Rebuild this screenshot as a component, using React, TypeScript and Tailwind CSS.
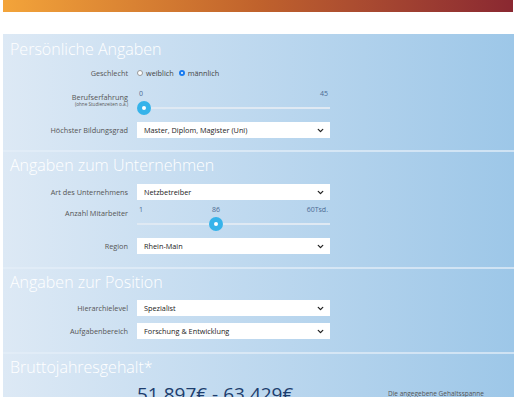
import { ChevronDown } from "lucide-react";

const font = { fontFamily: '"Open Sans", "Liberation Sans", sans-serif' };

function Select({ value }: { value: string }) {
  return (
    <div className="flex h-[16px] w-[193px] items-center justify-between bg-white pl-[7px] pr-[5px] text-[7.3px] text-[#222]">
      <span>{value}</span>
      <ChevronDown size={9} strokeWidth={3.5} className="text-[#222]" />
    </div>
  );
}

function Label({ children }: { children: React.ReactNode }) {
  return <div className="w-[125px] shrink-0 text-right text-[7.3px] text-[#555]">{children}</div>;
}

function Slider({ min, value, max, pos }: { min: string; value?: string; max: string; pos: number }) {
  return (
    <div className="w-[193px]">
      <div className="relative flex h-[12px] items-center justify-between px-[2px] text-[7px] text-[#4d6b93]">
        <span>{min}</span>
        {value && (
          <span className="absolute -translate-x-1/2" style={{ left: pos }}>
            {value}
          </span>
        )}
        <span>{max}</span>
      </div>
      <div className="relative flex h-[16px] items-center">
        <div className="h-[2px] w-full bg-[#dfe9f3]" />
        <div
          className="absolute top-[1px] flex h-[14px] w-[14px] -translate-x-1/2 items-center justify-center rounded-full bg-[#36b3ea]"
          style={{ left: pos }}
        >
          <div className="h-[4px] w-[4px] rounded-full bg-white" />
        </div>
      </div>
    </div>
  );
}

function Title({ children }: { children: React.ReactNode }) {
  return <h2 className="h-[24px] pl-[7px] text-[16px] leading-[24px] font-light text-white">{children}</h2>;
}

export default function App() {
  return (
    <div className="h-[397px] w-[520px] overflow-hidden bg-white" style={font}>
      <div className="ml-[3px] h-[12px] w-[510px] bg-gradient-to-r from-[#f3a43a] via-[#c0622c] to-[#8a2831]" />
      <div className="mt-[22px] ml-[3px] w-[511px] bg-gradient-to-r from-[#dde9f5] to-[#9dc7e8]">
        <section className="pt-[3px] pb-[12px]">
          <Title>Persönliche Angaben</Title>
          <div className="mt-[5px] flex h-[14px] items-center gap-[9px]">
            <Label>Geschlecht</Label>
            <div className="flex items-center text-[7.3px] text-[#444]">
              <span className="mr-[3px] h-[6px] w-[6px] rounded-full border border-[#999] bg-white" />
              <span>weiblich</span>
              <span className="mr-[3px] ml-[5px] flex h-[6px] w-[6px] items-center justify-center rounded-full bg-[#1a7cf0]">
                <span className="h-[2px] w-[2px] rounded-full bg-white" />
              </span>
              <span>männlich</span>
            </div>
          </div>
          <div className="mt-[8px] flex gap-[9px]">
            <div className="w-[125px] shrink-0 pt-[6px] text-right leading-none text-[#555]">
              <div className="text-[7.3px]">Berufserfahrung</div>
              <div className="mt-[1px] text-[4.6px]">(ohne Studienzeiten o.ä.)</div>
            </div>
            <Slider min="0" max="45" pos={7} />
          </div>
          <div className="mt-[6px] flex h-[16px] items-center gap-[9px]">
            <Label>Höchster Bildungsgrad</Label>
            <Select value="Master, Diplom, Magister (Uni)" />
          </div>
        </section>

        <section className="border-t-2 border-[#e4eef8]/70 pt-[1px] pb-[13px]">
          <Title>Angaben zum Unternehmen</Title>
          <div className="mt-[7px] flex h-[16px] items-center gap-[9px]">
            <Label>Art des Unternehmens</Label>
            <Select value="Netzbetreiber" />
          </div>
          <div className="mt-[4px] flex gap-[9px]">
            <div className="w-[125px] shrink-0 pt-[4px] text-right text-[7.3px] text-[#555]">Anzahl Mitarbeiter</div>
            <Slider min="1" value="86" max="60Tsd." pos={79} />
          </div>
          <div className="mt-[6px] flex h-[16px] items-center gap-[9px]">
            <Label>Region</Label>
            <Select value="Rhein-Main" />
          </div>
        </section>

        <section className="border-t-2 border-[#e4eef8]/70 pt-[1px] pb-[13px]">
          <Title>Angaben zur Position</Title>
          <div className="mt-[6px] flex h-[16px] items-center gap-[9px]">
            <Label>Hierarchielevel</Label>
            <Select value="Spezialist" />
          </div>
          <div className="mt-[7px] flex h-[16px] items-center gap-[9px]">
            <Label>Aufgabenbereich</Label>
            <Select value="Forschung & Entwicklung" />
          </div>
        </section>

        <section className="border-t-2 border-[#e4eef8]/70 pt-[1px] pb-[30px]">
          <Title>Bruttojahresgehalt*</Title>
          <div className="flex items-start">
            <div className="mt-[2px] ml-[134px] w-[250px] text-[19px] leading-[26px] text-[#1d3d6d]">51.897€ - 63.429€</div>
            <div className="mt-[10px] w-[98px] text-center text-[6.5px] leading-[9px] text-[#555]">Die angegebene Gehaltsspanne</div>
          </div>
        </section>
      </div>
    </div>
  );
}
